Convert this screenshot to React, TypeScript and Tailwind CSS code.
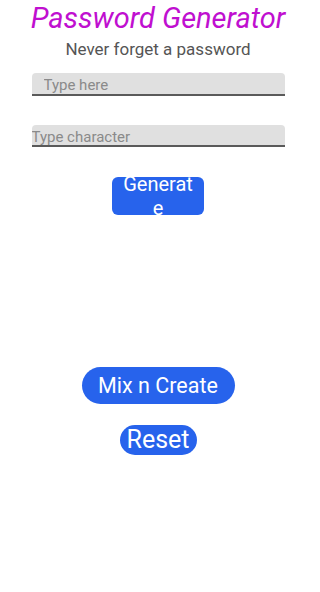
import React, { useState } from "react";

const App = () => {
  const [word, setWord] = useState("");
  const [chars, setChars] = useState("");

  return (
    <div
      className="flex min-h-[592px] w-full flex-col items-center bg-white pr-[4px]"
      style={{ fontFamily: "Roboto, 'Liberation Sans', sans-serif" }}
    >
      <h1 className="mt-[2px] text-[29px] leading-[33px] italic font-normal text-[#c00fd0]">
        Password Generator
      </h1>
      <p className="mt-[4px] text-[17px] leading-[20px] text-[#555555]">Never forget a password</p>

      <input
        value={word}
        onChange={(e) => setWord(e.target.value)}
        placeholder="Type here"
        className="mt-[14px] h-[23px] w-[253px] rounded-t-[4px] border-b-2 border-[#5a5a5a] bg-[#e0e0e0] pt-[3px] pl-[12px] text-[15px] leading-[20px] text-[#333] outline-none placeholder:text-[#8a8a8a]"
      />

      <input
        value={chars}
        onChange={(e) => setChars(e.target.value)}
        placeholder="Type character"
        className="mt-[29px] h-[22px] w-[253px] rounded-t-[4px] border-b-2 border-[#5a5a5a] bg-[#e0e0e0] pt-[3px] text-[15px] leading-[20px] text-[#333] outline-none placeholder:text-[#8a8a8a]"
      />

      <button className="mt-[30px] flex h-[38px] w-[92px] items-center justify-center rounded-[6px] bg-[#2763ec] px-2 text-white">
        <span className="block w-full break-all text-center text-[20px] leading-[24px]">Generate</span>
      </button>

      <button className="mt-[152px] flex h-[37px] w-[153px] items-center justify-center rounded-full bg-[#2763ec] text-[21.5px] leading-[24px] text-white">
        Mix n Create
      </button>

      <button className="mt-[21px] flex h-[30px] w-[77px] items-center justify-center rounded-full bg-[#2763ec] text-[25px] leading-[30px] text-white">
        Reset
      </button>
    </div>
  );
};

export default App;
